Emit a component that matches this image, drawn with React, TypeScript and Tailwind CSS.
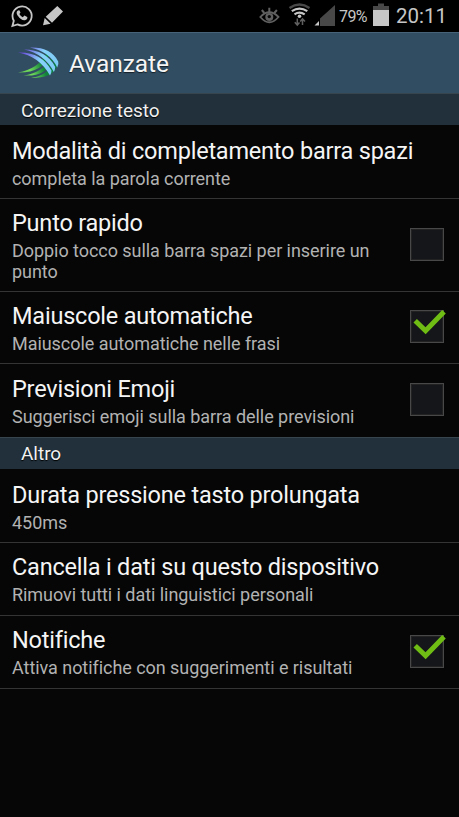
type Item = {
  title: string;
  summary: string;
  checked?: boolean;
  box: string;
};

const textItems: Item[] = [
  { title: 'Modalità di completamento barra spazi', summary: 'completa la parola corrente', box: 'h-[74px] pt-3' },
  { title: 'Punto rapido', summary: 'Doppio tocco sulla barra spazi per inserire un punto', checked: false, box: 'h-[93px] pt-2.5' },
  { title: 'Maiuscole automatiche', summary: 'Maiuscole automatiche nelle frasi', checked: true, box: 'h-[72px] pt-2.5' },
  { title: 'Previsioni Emoji', summary: 'Suggerisci emoji sulla barra delle previsioni', checked: false, box: 'h-[73px] pt-[11px]' },
];

const otherItems: Item[] = [
  { title: 'Durata pressione tasto prolungata', summary: '450ms', box: 'h-[74px] pt-3 tracking-[-0.16px]' },
  { title: 'Cancella i dati su questo dispositivo', summary: 'Rimuovi tutti i dati linguistici personali', box: 'h-[73px] pt-2.5' },
  { title: 'Notifiche', summary: 'Attiva notifiche con suggerimenti e risultati', checked: true, box: 'h-[73px] pt-2.5' },
];

function CheckBox({ checked }: { checked: boolean }) {
  return (
    <div className="relative mb-3 mr-[15px] h-[33px] w-[34px] shrink-0 self-center border border-[#484848] bg-[#141619] shadow-[inset_0_0_0_1px_#222]">
      {checked && (
        <svg className="absolute -left-px -top-px overflow-visible" width="36" height="33" viewBox="0 0 36 33">
          <path d="M5.2 10.8 L15.6 20.8 L34 1.8" fill="none" stroke="#6fbd14" strokeWidth="5" />
        </svg>
      )}
    </div>
  );
}

function Row({ item, last }: { item: Item; last: boolean }) {
  return (
    <div className={`flex items-start border-b pl-3 ${item.box} ${last ? 'border-transparent' : 'border-[#343434]'}`}>
      <div className="min-w-0 flex-1">
        <div className="whitespace-nowrap pb-[2px] text-[23.5px] leading-[29px] tracking-[-0.21px] text-[#f5f5f5]">{item.title}</div>
        <div className="max-w-[380px] text-[18px] leading-[21px] tracking-[-0.05px] text-[#b2b2b2]">{item.summary}</div>
      </div>
      {item.checked !== undefined && <CheckBox checked={item.checked} />}
    </div>
  );
}

function SectionHeader({ label, offset }: { label: string; offset: string }) {
  return (
    <div className={`flex h-8 items-center border-t border-[#36454e] bg-[#21303b] pl-[21px] text-[19px] tracking-[-0.03px] text-[#f1f1f1] [text-shadow:0_1px_1px_#000] ${offset}`}>
      {label}
    </div>
  );
}

function StatusBar() {
  return (
    <div className="flex h-8 items-center justify-between bg-black text-[#c6c6c6]">
      <svg width="70" height="32" viewBox="0 0 70 32">
        <path d="M12.4 26 L13.8 20.8 A9.6 9.6 0 1 1 17.5 24.4 Z" fill="none" stroke="#c6c6c6" strokeWidth="1.8" />
        <path d="M18 10.4 C16 11.6 16.5 14 18 16 C20 19 23 20.8 25.5 20 C27 19.4 27.8 18 27.2 17 L24.4 15.5 L22.8 17.2 C21 16.4 20.2 15.5 19.4 14 L20.5 12.4 L19.3 10.2 Z" fill="#c6c6c6" />
        <path d="M57.3 6 L63 11.4 L52 22.8 L45.7 16.8 Z M44.7 18 L50.6 23.8 L43 25.3 Z" fill="#c6c6c6" />
      </svg>
      <div className="flex h-full items-center">
        <svg width="77" height="32" viewBox="259 0 77 32">
          <g fill="none" stroke="#606060" strokeWidth="1.8">
            <path d="M260.3 17 Q269.3 7.5 278.5 17 Q269.3 27.5 260.3 17Z" />
            <path d="M269.3 7.8 V12 M261.8 10 L264.3 13 M276.9 10 L274.3 13" strokeWidth="2" />
          </g>
          <circle cx="269.3" cy="17" r="4" fill="#606060" />
          <circle cx="269.3" cy="16.6" r="1.7" fill="#080808" />
          <path d="M289.5 8 Q299.5 1 309.5 8" fill="none" stroke="#484848" strokeWidth="2.3" />
          <g fill="none" stroke="#c6c6c6" strokeWidth="2.2">
            <path d="M291.8 11.2 Q299.5 6 307.3 11.2 M294.5 14.4 Q299.5 11 304.7 14.4" />
          </g>
          <circle cx="299.5" cy="16.3" r="1.8" fill="#c6c6c6" />
          <path d="M297.3 18.5 V25 M294.8 22.2 L297.3 25 L299.5 22.5 M302.5 25 V18.8 M300.2 21.4 L302.5 18.8 L305 21.5" fill="none" stroke="#606060" strokeWidth="1.5" />
          <path d="M335 5 V26 H320 V18.5 Z" fill="#484848" />
          <path d="M319 21 V25.5 H314.5 Z" fill="#c6c6c6" />
        </svg>
        <span className="ml-[3px] w-[34px] whitespace-nowrap pt-px text-[16px] tracking-[-0.6px]">79%</span>
        <svg width="16" height="32" viewBox="0 0 16 32">
          <path d="M5 3.5 H11 V6 H16 V10 H0 V6 H5Z" fill="#484848" />
          <path d="M0 10 H16 V26 H0Z" fill="#c6c6c6" />
        </svg>
        <span className="ml-[7px] mr-[13px] w-[50px] whitespace-nowrap text-[20.5px]">20:11</span>
      </div>
    </div>
  );
}

function SwiftLogo() {
  return (
    <svg className="shrink-0" width="42" height="34" viewBox="0 0 42 34">
      <defs>
        <linearGradient id="wing" gradientUnits="userSpaceOnUse" x1="0" y1="5" x2="38" y2="24">
          <stop offset="0" stopColor="#5f2fd6" />
          <stop offset="0.3" stopColor="#7a86ea" />
          <stop offset="0.55" stopColor="#86d2fb" />
          <stop offset="1" stopColor="#7cc8f4" />
        </linearGradient>
        <linearGradient id="tail" gradientUnits="userSpaceOnUse" x1="0" y1="28" x2="34" y2="14">
          <stop offset="0" stopColor="#63c552" />
          <stop offset="0.35" stopColor="#6fd95b" />
          <stop offset="0.7" stopColor="#12833a" />
          <stop offset="1" stopColor="#0c7a45" />
        </linearGradient>
      </defs>
      <g fill="url(#tail)">
        <path d="M0 26.5 Q20 23 28 8 L31 9 Q25 27 0 26.5Z" />
        <path d="M5.5 29.5 Q24 27 32 13 L35.5 14 Q28 31 5.5 29.5Z" />
        <path d="M13 31.8 Q30 30 37 14 L40.5 15 Q38 33 13 31.8Z" />
      </g>
      <g fill="url(#wing)">
        <path d="M0 6.5 Q23 5.5 33.5 24.5 Q33.5 27 32 29.5 Q21 10 0 6.5Z" />
        <path d="M6 3.6 Q28.5 3.8 37.2 21 Q37.2 23.5 35.8 26 Q26.5 8 6 3.6Z" />
        <path d="M12 1.6 Q33 1 40.2 15.5 Q41 18 39.2 21.5 Q31.5 5.5 12 1.6Z" />
      </g>
    </svg>
  );
}

export default function App() {
  return (
    <main className="h-[817px] w-[459px] overflow-hidden bg-[#060606] font-[Roboto,sans-serif] [font-variant-ligatures:none]">
      <StatusBar />
      <header className="flex h-[61px] items-center border-t border-[#46637a] bg-[#314d61] pl-[18px]">
        <SwiftLogo />
        <h1 className="ml-[9px] pt-[2px] text-[24.5px] tracking-[-0.05px] text-[#f5f5f5] [text-shadow:0_1px_1px_#0009]">Avanzate</h1>
      </header>
      <SectionHeader label="Correzione testo" offset="pt-[3px]" />
      {textItems.map((item, i) => (
        <Row key={item.title} item={item} last={i === textItems.length - 1} />
      ))}
      <SectionHeader label="Altro" offset="pt-px" />
      {otherItems.map((item) => (
        <Row key={item.title} item={item} last={false} />
      ))}
    </main>
  );
}
